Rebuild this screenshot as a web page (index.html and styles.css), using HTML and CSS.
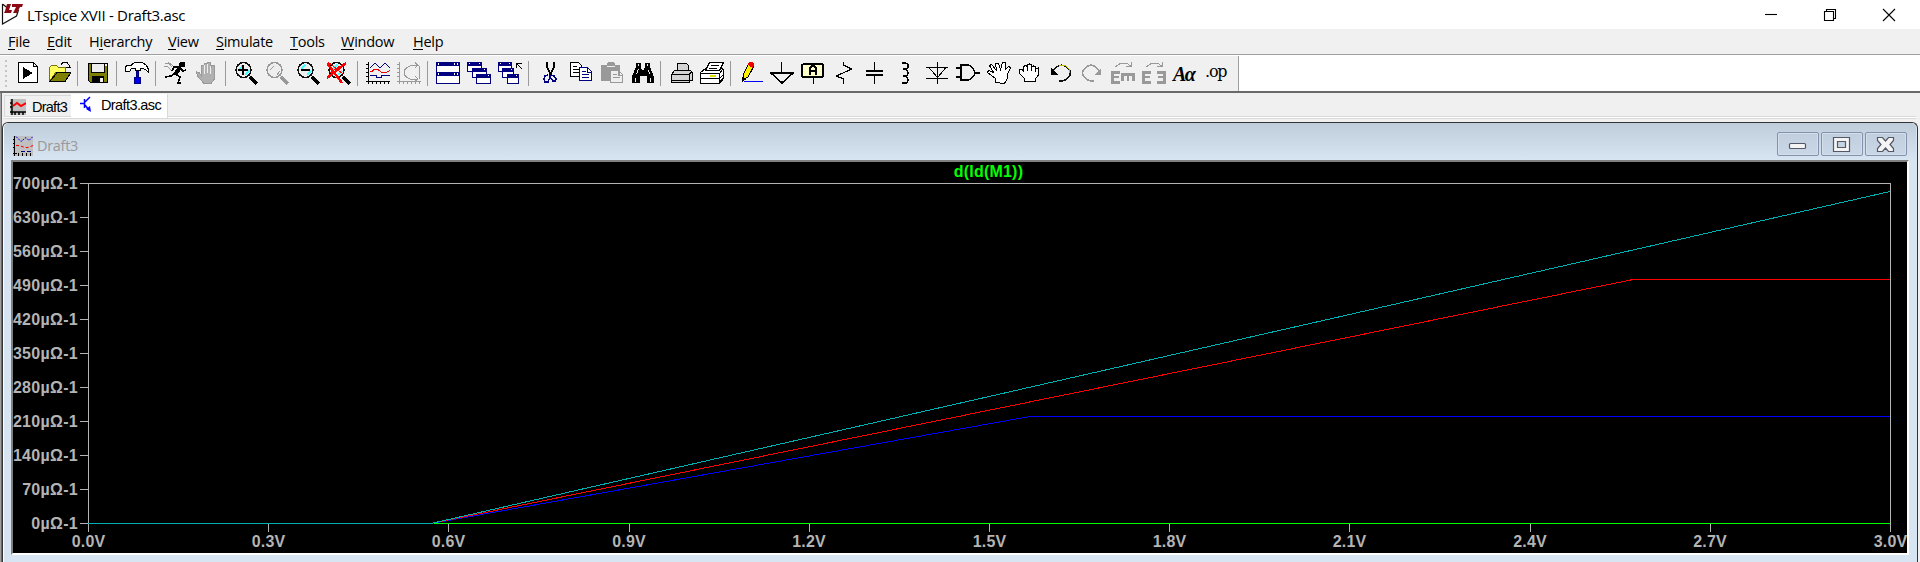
FILE: index.html
```
<!DOCTYPE html>
<html lang="en">
<head>
<meta charset="utf-8">
<title>LTspice XVII - Draft3.asc</title>
<link rel="stylesheet" href="styles.css">
</head>
<body>
<header class="titlebar">
  <svg class="app-logo" width="22" height="22" viewBox="0 0 22 22"><path d="M1.500 1v20l14-8 2-6M1.500 1l5 4" fill="none" stroke="#111" stroke-width="1.200"/><path d="M6 1h4L8 7h3l-1 3H3l1-2zM11 1h11l-1 3h-2l-3 6h-4l3-6h-4z" fill="#8b0a14"/></svg>
  <h1 class="app-title">LTspice XVII - Draft3.asc</h1>
  <div class="window-controls">
    <svg width="14" height="14" viewBox="0 0 14 14"><path d="M1 6.500h12"/></svg>
    <svg width="14" height="14" viewBox="0 0 14 14"><path d="M1.500 3.500h9v9h-9zM3.500 3V1.500h9v9h-2"/></svg>
    <svg width="14" height="14" viewBox="0 0 14 14"><path d="M1 1l12 12M13 1L1 13"/></svg>
  </div>
</header>
<nav class="menubar">
  <span class="m-file"><u>F</u>ile</span><span class="m-edit"><u>E</u>dit</span><span class="m-hier">H<u>i</u>erarchy</span><span class="m-view"><u>V</u>iew</span><span class="m-sim"><u>S</u>imulate</span><span class="m-tools"><u>T</u>ools</span><span class="m-win"><u>W</u>indow</span><span class="m-help"><u>H</u>elp</span>
</nav>
<div class="toolrow">
<div class="toolbar">
  <div class="grip"></div>
  <svg class="ic" viewBox="0 0 24 24"><path class="k w" d="M2.500.5h15l4 4v16h-19zM17.500.5v4h4"/><path d="M7 5l10 6-10 6z"/></svg>
  <svg class="ic" viewBox="0 0 24 24"><path fill="#ffff60" stroke="#777700" d="M2.500 19V5.500l2-2h5l2 2h7V10H9L3 19"/><path fill="#808000" stroke="#000" d="M3 19.500l7-9h14l-6 9z"/><path class="k" d="M14 2.500l2-2h4l3 4M24 1v4h-5"/></svg>
  <i class="sep"></i>
  <svg class="ic" viewBox="0 0 24 24"><path fill="#808000" stroke="#000" d="M2.500 1.500h19v19h-17l-2-2z"/><path fill="#eee" stroke="#000" d="M5.500 1.500h13v9h-13z"/><path d="M6 14h12v7H6z"/><path fill="#eee" d="M14 16h3v4h-3zM19 2h2v2h-2z"/></svg>
  <i class="sep"></i>
  <svg class="ic" viewBox="0 0 24 24"><path class="k w" d="M.5 9.500V5l2-2h4l3-2.500h8l4 3 2 4v3l-2-2-3-2h-3v2h-5v-2h-4l-2 3z"/><path fill="#0000f0" stroke="#000080" d="M11.500 9v6l-2 1v5h6v-5l-2-1V9z"/></svg>
  <i class="sep"></i>
  <svg class="ic" viewBox="0 0 24 24"><path stroke="#999" fill="none" d="M1 1h3l4 4M0 4h3l4 4M4 0l5 4"/><path d="M16 0h5v5h-4l-1 4-3 5-4-2 5-7z"/><path fill="none" stroke="#000" stroke-width="1.600" d="M14 5h-4l-2 4M16 6l3 3 3-1M11 11l-4 3-6 1M12 12l4 3-2 6h3"/></svg>
  <svg class="ic" viewBox="0 0 24 24"><path fill="#b0b0b0" stroke="#999" d="M8.500 21l-6-7-1-4 3 1 2 3V3.500h3V10 1.500h3V10 .5h3V10l1-7h3v14l-3 4z"/><path stroke="#eee" fill="none" d="M9.500 3v9M12.500 2v9M15.500 4v8"/></svg>
  <i class="sep"></i>
  <svg class="ic" viewBox="0 0 24 24"><path class="k2" d="M16 15l7 7"/><circle cx="9.500" cy="8" r="7.500" class="lens"/><path class="cy" d="M5 8l4-5M11 13l4-4"/><path class="k2 thin" d="M4 8h10M9 3v10"/></svg>
  <svg class="ic" viewBox="0 0 24 24"><path class="k2 gs" d="M16 15l7 7"/><circle cx="9.500" cy="8" r="7.500" class="lens gs"/><path class="gs" d="M5 8l4-4M12 13l3-4"/></svg>
  <svg class="ic" viewBox="0 0 24 24"><path class="k2" d="M16 15l7 7"/><circle cx="9.500" cy="8" r="7.500" class="lens"/><path class="cy" d="M5 7l4-4M11 13l4-4"/><path stroke="#000" stroke-width="2" d="M5 8h9"/></svg>
  <svg class="ic" viewBox="0 0 24 24"><path class="k2" d="M16 15l7 7"/><circle cx="9.500" cy="8" r="7.500" class="lens"/><path class="cy" d="M5 8l5-5M11 13l4-4"/><path stroke="#f00" stroke-width="2.400" d="M0 1l15 20M19 1L0 16"/><path stroke="#f00" d="M1 0l15 12M3 11l10-7"/></svg>
  <i class="sep"></i>
  <svg class="ic" viewBox="0 0 24 24"><path class="k" d="M2.500 0v22M0 19.500h24M0 2.500h3M0 6.500h3M0 10.500h3M0 14.500h3M6.500 19v3M10.500 19v3M14.500 19v3M18.500 19v3M22.500 19v3"/><path fill="none" stroke="#000080" d="M4 6l5-5 5 5 5-5 5 5M4 13.500h6v2h5v-2h9"/><path fill="none" stroke="#e00" d="M4 9.500h2l2-2h4l4 3h4l4-2"/></svg>
  <svg class="ic" viewBox="0 0 24 24"><path class="g" d="M2.500 0v22M0 19.500h24M0 2.500h3M0 6.500h3M0 10.500h3M0 14.500h3M6.500 19v3M10.500 19v3M14.500 19v3M18.500 19v3M22.500 19v3M18 .5l3 3-3 2M21 3.500h-7l-4 2-3 3v4l3 3 4 2h6M18 14l3 3-3 2M22.500 4v13"/></svg>
  <i class="sep"></i>
  <svg class="ic" viewBox="0 0 24 24"><path class="n" d="M.5.500h23v10H.5zM.5 10.500h23v11H.5z"/><path fill="#000080" d="M0 0h24v4H0zM0 10h24v4H0z"/><path fill="#fff" d="M2 1h1v2H2zM18 1h1v2h-1zM21 1h1v2h-1zM2 11h1v2H2zM18 11h1v2h-1zM21 11h1v2h-1z"/></svg>
  <svg class="ic" viewBox="0 0 24 24"><path class="n" d="M.5.500h14v9H.5z"/><path fill="#000080" d="M0 0h15v4H0z"/><path class="n" d="M5.500 6.500h14v9h-14z"/><path fill="#000080" d="M5 6h15v4H5z"/><path class="n" d="M9.500 12.500h14v9h-14z"/><path fill="#000080" d="M9 12h15v4H9z"/><path fill="#fff" d="M2 1h1v1H2zM12 1h1v1h-1zM17 7h1v1h-1zM21 13h1v1h-1z"/></svg>
  <svg class="ic" viewBox="0 0 24 24"><path class="n" d="M.5.500h13v9H.5z"/><path fill="#000080" d="M0 0h14v4H0z"/><path class="n" d="M4.500 6.500h11v9h-11z"/><path fill="#000080" d="M4 6h12v4H4z"/><path class="n" d="M9.500 12.500h11v9h-11z"/><path fill="#000080" d="M9 12h12v4H9z"/><path fill="#fff" d="M2 1h1v1H2zM11 1h1v1h-1zM13 7h1v1h-1zM18 13h1v1h-1z"/><path class="k" d="M18.500 6V1.500H24M19 2l5 5"/></svg>
  <i class="sep"></i>
  <svg class="ic" viewBox="0 0 24 24"><path fill="none" stroke="#000" stroke-width="1.800" d="M10 0v5l4 8M17 0v5l-4 8"/><path fill="none" stroke="#000080" stroke-width="1.500" d="M11 13l-3 1-1 3 1 3h3l2-5v-2M14 13l3 1 2 3-1 2h-2l-2-3"/></svg>
  <svg class="ic" viewBox="0 0 24 24"><path class="k w" d="M2.500.5h8l3 3v11h-11z"/><path class="k" d="M5 4.500h4M5 7.500h6M5 10.500h6"/><path class="n" d="M11.500 5.500h8l4 4v9h-12z"/><path class="n" d="M14 9.500h4M14 12.500h7M14 15.500h7M19.500 6v4h4"/></svg>
  <svg class="ic" viewBox="0 0 24 24"><path fill="#999" d="M2 3h6V1l2-1h4l2 1v2h5v16H2z"/><path fill="#eee" d="M8 4h8v1H8z"/><path fill="#eee" stroke="#999" d="M11.500 8.500h8l4 4v8h-12zM19.500 9v4h4M14 12.500h4M14 15.500h7"/></svg>
  <svg class="ic" viewBox="0 0 24 24"><path d="M6 1h5v4l1 3h2l1-3V1h5v4l4 10v6h-7v-7h-7v7H2v-7l4-9z"/><path stroke="#eee" d="M8.500 2v2M8.500 7l-2 5M5.500 16v4M17.500 2v2M18.500 8l1 4M20.500 16v4"/></svg>
  <i class="sep"></i>
  <svg class="ic" viewBox="0 0 24 24"><path class="k light" d="M2.500 12.500l3-4h16l2 2v8h-3v2h-18zM8.500 8.500v-7h9l2 2v5z"/><path class="k light" d="M2.500 12.500h18v6h-18z"/><path class="k" d="M20 12l3-2"/></svg>
  <svg class="ic" viewBox="0 0 24 24"><path class="k w" d="M.5 10.500l5-4h17l1 1v9l-4 5H.5z"/><path class="k w" d="M5.500 8.500l4-8h14l-4 8z"/><path class="k" d="M11 3.500h8M9 6.500h8M.5 11.500h19v9M20 11l3-4M.5 16.500h19l4-4M20 20l3-4"/><path stroke="#dd0" stroke-width="2" d="M10 14h6"/></svg>
  <i class="sep"></i>
  <svg class="ic" viewBox="0 0 24 24"><path fill="#fff000" stroke="#000" d="M4 13L10 1l5 3-6 11-5 3z"/><path fill="#000" d="M3 20v-5l5 2z"/><path fill="#e00" d="M9 1l2-1h3l1 2-1 4-5-3z"/><path stroke="#00f" d="M5 19.500h19"/></svg>
  <svg class="ic" viewBox="0 0 24 24"><path class="k" stroke-width="1.600" d="M11.500 0v11M1 11h22L12 21z"/></svg>
  <svg class="ic" viewBox="0 0 24 24"><path fill="#ffffc8" stroke="#000" stroke-width="1.800" d="M3 2h18l1 1v11l-1 1H2l-1-1V3z"/><path class="k" d="M12.500 15v7"/><path fill="none" stroke="#000" stroke-width="2" d="M9 13V6l2-2h2l2 2v7M9 9h6"/></svg>
  <svg class="ic" viewBox="0 0 24 24"><path class="k" stroke-width="1.200" d="M11.500 0v3l8 4-15 7 7 3v5"/></svg>
  <svg class="ic" viewBox="0 0 24 24"><path class="k" d="M11.500 0v8M11.500 14v8"/><path fill="#000" d="M3 8h17v2H3zM3 12h17v2H3z"/></svg>
  <svg class="ic" viewBox="0 0 24 24"><path class="k" stroke-width="1.500" d="M8 1h3q4 1 3 4t-5 2q5 0 5 4t-5 3q5 0 5 4t-6 3"/></svg>
  <svg class="ic" viewBox="0 0 24 24"><path class="k" d="M12.500 0v22M1 5.500h22M4 5.500l8.500 10 8.500-10M1 16.500h22"/></svg>
  <svg class="ic" viewBox="0 0 24 24"><path class="k" stroke-width="1.400" d="M5 3h7q5 1 7 8-2 6-7 7H5zM0 6h5M0 15h5M19 11h5"/></svg>
  <svg class="ic" viewBox="0 0 24 24"><path class="k w" d="M8.500 20.500v-4l-8-6 1-2 5 2-4-7 2-1 5 6-1-7h3l2 6 2-7h3v7l3-3 2 1-3 7v4l-3 5z"/></svg>
  <svg class="ic" viewBox="0 0 24 24"><path class="k w" d="M6.500 19.500v-3l-5-5v-4h3l1 2v-5l2-1 2 1V3l2-1 2 1v2l2-1 2 1v2l3-1v7l-3 4v3z"/><path class="k" d="M9.500 5v4M13.500 5v4M17.500 7v3"/></svg>
  <svg class="ic" viewBox="0 0 24 24"><path fill="none" stroke="#111" stroke-width="1.500" d="M3 10q6-9 13-6 7 4 5 9-4 7-11 6"/><path d="M2 6v7h7z"/><path fill="none" stroke="#bb0" d="M10 3h6l4 4v4"/></svg>
  <svg class="ic" viewBox="0 0 24 24"><path class="g" stroke-width="1.500" d="M19 9q-5-8-11-5-7 4-5 9 4 7 11 6"/><path fill="#999" d="M21 6v7h-7z"/></svg>
  <svg class="ic" viewBox="0 0 24 24"><path fill="#999" d="M0 9h9v3H3v2h5v2H3v3h6v3H0zM10 11h14v8h-3v-5h-3v5h-2v-5h-3v5h-3z"/><path class="g" d="M4 5l6-4h5l5 3M15 4.500h5V0"/></svg>
  <svg class="ic" viewBox="0 0 24 24"><path fill="#999" d="M0 9h9v3H3v2h5v2H3v3h6v3H0zM24 9h-9v3h6v2h-5v2h5v3h-6v3h9z"/><path class="g" d="M4 5l6-4h5l5 3M15 4.500h5V0"/></svg>
  <span class="ic glyph aa">Aα</span>
  <span class="ic glyph op">.op</span>
</div>
</div>
<main class="client">
  <div class="tabs">
    <div class="tab first"><svg width="16" height="16" viewBox="0 0 16 16"><path fill="#c0c0c0" d="M0 0h16v16H0z"/><path class="k" stroke-width="1.500" d="M2 0v16M0 13h16M0 4h2M0 8h2M5 13v3M9 13v3M13 13v3"/><path fill="none" stroke="#f00" stroke-width="2" d="M3 7l4-3 4 3 5-3"/></svg><span>Draft3</span></div>
    <div class="tab active"><svg width="12" height="17" viewBox="0 0 12 17"><path fill="none" stroke="#00f" stroke-width="1.500" d="M4.500 3v9M0 7.500h4M5 6l5-5M5 9l4 5"/><path fill="#00f" d="M6 13l4-3 1 6z"/></svg><span>Draft3.asc</span></div>
  </div>
  <section class="child">
    <div class="child-title">
      <svg width="20" height="20" viewBox="0 0 20 20"><path fill="#c0c0c0" d="M0 0h20v20H0z"/><path class="k" d="M1.500 0v20M0 3.500h1M0 7.500h1M0 11.500h1M0 17.500h4M5.500 17v3M9.500 17v3M13.500 17v3M17.500 17v3"/><path fill="none" stroke="#00f" stroke-dasharray="2 1" d="M3 .5l5 5 5-4 3 3 4-4"/><path fill="none" stroke="#f00" stroke-dasharray="3 2" d="M3 9.500h3l6 2h3l5-2"/><path fill="none" stroke="#000080" stroke-dasharray="4 2" d="M8 15.500h12"/></svg>
      <span class="child-name">Draft3</span>
      <div class="child-buttons">
        <b><svg width="24" height="20" viewBox="0 0 24 20"><rect class="cb" x="3.500" y="9.500" width="16" height="5" rx="1"/></svg></b>
        <b><svg width="24" height="20" viewBox="0 0 24 20"><path class="cb" fill-rule="evenodd" d="M3.500 3.500h16v14h-16zM7.500 7.500v6h8v-6z"/></svg></b>
        <b><svg width="24" height="20" viewBox="0 0 24 20"><path class="cb" d="M3.500 3.500h5l3 3.500 3-3.500h5v3L16 10.500l3.500 4v3h-5l-3-3.500-3 3.500h-5v-3l3.500-4-3.500-4z"/></svg></b>
      </div>
    </div>
    <div class="plot">
      <svg class="chart" width="1894" height="391" viewBox="13 162 1894 391">
        <text class="trace" x="988.500" y="177" text-anchor="middle">d(Id(M1))</text>
        <g class="ylab" text-anchor="end">
          <text x="78" y="189">700µΩ-1</text><text x="78" y="223">630µΩ-1</text><text x="78" y="257">560µΩ-1</text><text x="78" y="291">490µΩ-1</text><text x="78" y="325">420µΩ-1</text><text x="78" y="359">350µΩ-1</text><text x="78" y="393">280µΩ-1</text><text x="78" y="427">210µΩ-1</text><text x="78" y="461">140µΩ-1</text><text x="78" y="495">70µΩ-1</text><text x="78" y="529">0µΩ-1</text>
        </g>
        <g class="xlab" text-anchor="middle">
          <text x="88.500" y="547">0.0V</text><text x="268.500" y="547">0.3V</text><text x="448.500" y="547">0.6V</text><text x="629" y="547">0.9V</text><text x="809" y="547">1.2V</text><text x="989.500" y="547">1.5V</text><text x="1169.500" y="547">1.8V</text><text x="1349.500" y="547">2.1V</text><text x="1530" y="547">2.4V</text><text x="1710" y="547">2.7V</text><text x="1890.500" y="547">3.0V</text>
        </g>
        <path class="axis" d="M80 183.500h1811M88.500 183v349M1890.500 183v349M80 217.500h8M80 251.500h8M80 285.500h8M80 319.500h8M80 353.500h8M80 387.500h8M80 421.500h8M80 455.500h8M80 489.500h8M80 523.500h8M268.500 523v9M448.500 523v9M629.500 523v9M809.500 523v9M989.500 523v9M1169.500 523v9M1349.500 523v9M1530.500 523v9M1710.500 523v9"/>
        <path class="line green" d="M88 523.500H1890"/>
        <path class="line blue" d="M431 523.500L1030 416.500H1890"/>
        <path class="line red" d="M431 523.500L1633 279.500H1890"/>
        <path class="line teal" d="M88 523.500H431L1890 191.500"/>
      </svg>
    </div>
  </section>
</main>
</body>
</html>
```
FILE: styles.css
```
* { box-sizing: border-box; }
body { margin: 0; width: 1920px; height: 562px; overflow: hidden; background: #fff; color: #000; font-family: "Open Sans", sans-serif; display: flex; flex-direction: column; }
svg { display: block; flex: none; }
.titlebar { height: 29px; flex: none; display: flex; align-items: center; padding: 0 24px 0 1px; }
.app-logo { margin-top: -1px; }
.app-title { margin: 0 0 0 4px; font-size: 15px; font-weight: 400; letter-spacing: -0.28px; white-space: nowrap; line-height: 28px; }
.window-controls { margin-left: auto; display: flex; gap: 45px; }
.window-controls path { fill: none; stroke: #000; stroke-width: 1.1; }
.menubar { height: 26px; flex: none; background: #f0f0f0; border-bottom: 1px solid #a0a0a0; display: flex; padding-left: 8px; font-size: 14.5px; line-height: 25px; }
.menubar span { flex: none; white-space: nowrap; letter-spacing: -0.25px; }
.menubar u { text-decoration: none; background: linear-gradient(#000, #000) 0 17px / 100% 1px no-repeat; }
.m-file { width: 39px; } .m-edit { width: 42px; } .m-hier { width: 79px; } .m-view { width: 48px; }
.m-sim { width: 74px; } .m-tools { width: 51px; } .m-win { width: 72px; } .m-help { width: 40px; }
.toolrow { height: 38px; flex: none; padding-top: 1px; border-bottom: 2px solid #696969; border-image: linear-gradient(#a0a0a0 50%, #696969 50%) 2; border-width: 0 0 2px; }
.toolbar { width: 1239px; height: 35px; background: #f0f0f0; border-right: 1px solid #a0a0a0; display: flex; gap: 7px; padding-top: 6px; }
.grip { width: 4px; height: 28px; margin: -2px 0 0 5px; background: repeating-linear-gradient(#c4c4c4 0 2px, transparent 2px 5px); border-right: 2px solid #f0f0f0; }
.ic { width: 24px; height: 24px; flex: none; shape-rendering: crispEdges; }
.sep { width: 1px; height: 25px; margin: -1px 1px 0 -1px; background: #9a9a9a; flex: none; }
.k { fill: none; stroke: #000; }
.w { fill: #fff; }
.light { fill: #d4d4d4; }
.n { fill: #fff; stroke: #000080; }
.g { fill: none; stroke: #999; }
.k2 { fill: none; stroke: #000; stroke-width: 3.5; }
.k2.thin { stroke-width: 2; }
.lens { fill: #eee; stroke: #111; stroke-width: 1.5; }
.k2.gs, .lens.gs, .gs { stroke: #999; }
.cy { fill: none; stroke: #4ff; stroke-width: 2; }
.glyph { font: italic bold 20px/24px "Liberation Serif", serif; white-space: nowrap; }
.aa { letter-spacing: -1.5px; }
.op { font: 16px/20px "DejaVu Serif", "Liberation Serif", serif; letter-spacing: -1.2px; padding-left: 1px; }
.client { flex: 1; min-height: 0; background: #f0f0f0; border-left: 1px solid #a0a0a0; box-shadow: inset 1px 0 #696969; padding: 0 2px 0 1px; display: flex; flex-direction: column; }
.tabs { height: 29px; flex: none; display: flex; margin: 0 2px 0 2px; padding-top: 1px; align-items: flex-start; background: linear-gradient(transparent 23px, #d9d9d9 23px 24px, #fff 24px 25px, #d9d9d9 25px 26px, transparent 26px); font: 14.5px "Liberation Sans", Arial, sans-serif; }
.tab { display: flex; align-items: center; white-space: nowrap; }
.tab.first { width: 67px; height: 21px; margin-top: 1px; border: 1px solid #d9d9d9; border-width: 1px 0 0 1px; padding: 1px 0 0 5px; gap: 6px; letter-spacing: -0.75px; }
.tab.active { width: 97px; height: 24px; background: #fff; border-right: 1px solid #d9d9d9; padding: 0 0 3px 9px; gap: 9px; letter-spacing: -0.6px; }
.child { flex: 1; min-height: 0; border: 1px solid #333; border-bottom: 0; border-radius: 6px 6px 0 0; background: #d7e4f2; display: flex; flex-direction: column; box-shadow: inset 1px 1px #fff; padding: 0 8px 8px; }
.child-title { height: 37px; flex: none; margin: 0 -7px; padding: 0 1px 0 9px; display: flex; align-items: center; background: linear-gradient(#bfcddb, #d7e4f2); border-radius: 5px 5px 0 0; }
.child-title > svg { margin: 8px 0 0 0; }
.child-name { color: #999; font-size: 14.5px; letter-spacing: -0.3px; margin: 8px 0 0 4px; }
.child-buttons { margin: 5px 8px 0 auto; display: flex; gap: 2px; }
.child-buttons b { width: 42px; height: 24px; border: 1px solid #8491ad; border-radius: 2px; background: linear-gradient(#c0cedd, #cad7e6); box-shadow: inset 0 0 0 1px #d4dfec; display: flex; justify-content: center; align-items: center; }
.cb { fill: #f4f4f4; stroke: #535766; stroke-width: 1.2; }
.plot { flex: none; width: 1898px; height: 395px; background: #000; border: 2px solid #fff; border-top-color: #808080; border-left-color: #808080; overflow: hidden; }
.chart { overflow: hidden; font: bold 16px "Liberation Sans", Arial, sans-serif; }
.chart text { fill: #b4b4b4; }
.chart .trace { fill: #0f0; letter-spacing: 0.2px; }
.ylab { letter-spacing: 0.3px; }
.xlab { letter-spacing: 0.2px; }
.axis { fill: none; stroke: #b4b4b4; shape-rendering: crispEdges; }
.line { fill: none; shape-rendering: crispEdges; }
.green { stroke: #0f0; } .blue { stroke: #00f; } .red { stroke: #f00; } .teal { stroke: #00b0b0; }
```
